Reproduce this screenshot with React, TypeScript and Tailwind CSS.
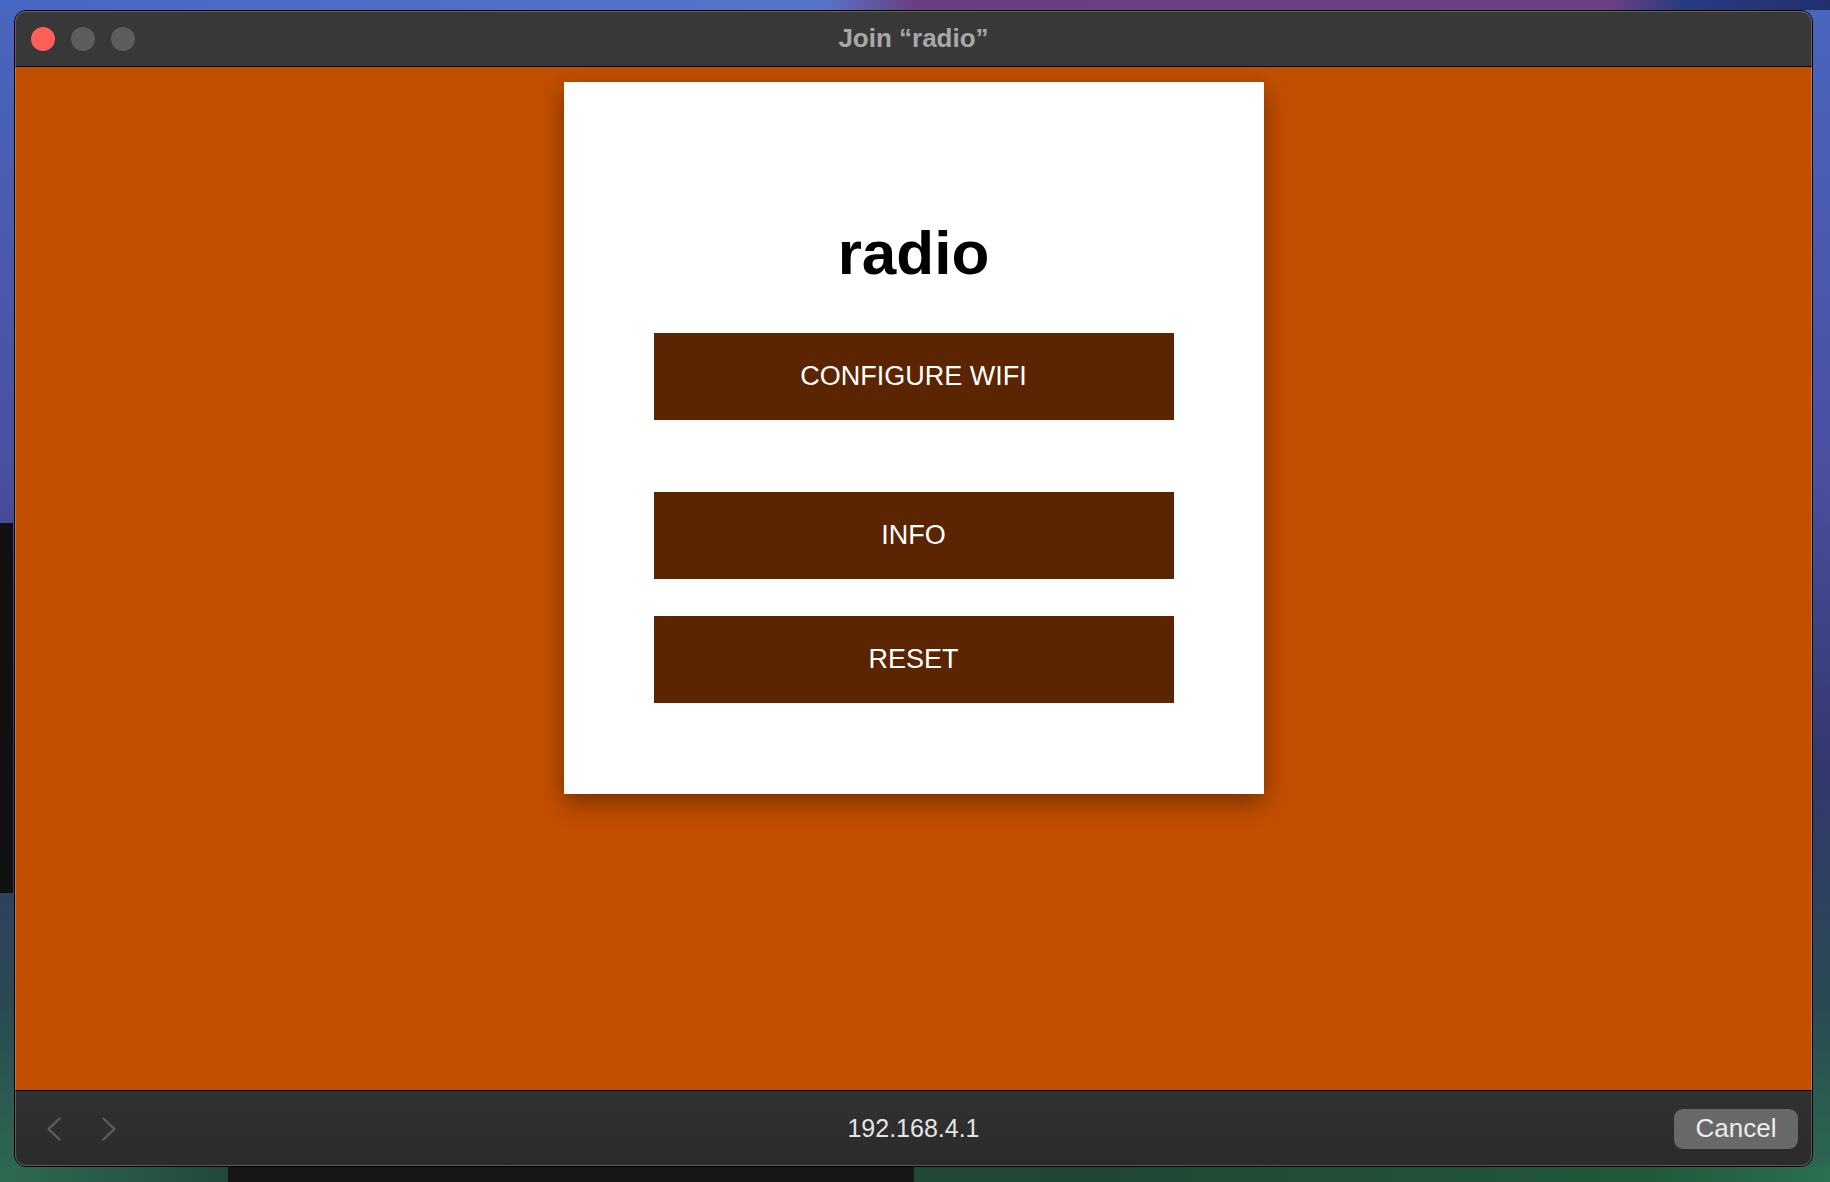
const menuItems = ['CONFIGURE WIFI', 'INFO', 'RESET'];

function TrafficLights() {
  return (
    <div className="flex items-center gap-4 pl-4">
      <span className="h-6 w-6 rounded-full bg-[#fe5f57]" />
      <span className="h-6 w-6 rounded-full bg-[#5d5d5d]" />
      <span className="h-6 w-6 rounded-full bg-[#5d5d5d]" />
    </div>
  );
}

function Chevron({ dir }: { dir: 'left' | 'right' }) {
  return (
    <svg width="14" height="24" viewBox="0 0 14 24" fill="none" stroke="currentColor" strokeWidth="2.2" strokeLinecap="round" strokeLinejoin="round">
      {dir === 'left' ? <path d="M12.5 1.5 1.5 12l11 10.5" /> : <path d="M1.5 1.5 12.5 12l-11 10.5" />}
    </svg>
  );
}

function PortalCard() {
  return (
    <div className="mt-[15px] flex h-[712px] w-[700px] flex-col items-center bg-white pt-[140px] shadow-[0_8px_22px_rgba(0,0,0,0.4)]">
      <h1 className="h-[62px] text-[62px] font-bold leading-[62px] text-black">radio</h1>
      <div className="mt-[49px] flex w-[520px] flex-col">
        {menuItems.map((label, i) => (
          <button
            key={label}
            className={
              'flex h-[87px] w-full items-center justify-center bg-[#5a2500] text-[27px] text-white ' +
              (i === 1 ? 'mt-[72px]' : i === 2 ? 'mt-[37px]' : '')
            }
          >
            {label}
          </button>
        ))}
      </div>
    </div>
  );
}

export default function App() {
  return (
    <div
      className="relative h-[1182px] w-full overflow-hidden bg-[linear-gradient(to_bottom,#4a66be_0%,#4b4fa0_40%,#33386e_65%,#2a4a52_85%,#2b6a50_100%)] pl-[14px] pt-[10px]"
      style={{ fontFamily: '"Liberation Sans", Arial, sans-serif' }}
    >
      {/* wallpaper bits around the window */}
      <div className="absolute left-0 right-0 top-0 h-[10px] bg-[linear-gradient(to_right,#4767c4_0%,#5775c8_45%,#6a3f82_50%,#6b4183_88%,#273c80_92%,#24306e_100%)]" />
      <div className="absolute bottom-0 left-0 right-0 h-[16px] bg-[linear-gradient(to_right,#2f6a52_0%,#224a3c_12%,#1f4834_60%,#22583a_90%,#2b7050_100%)]" />
      <div className="absolute bottom-0 left-[228px] h-[16px] w-[686px] bg-[#161616]" />
      <div className="absolute left-0 top-[523px] h-[370px] w-[13px] bg-[#111111]" />

      <div className="relative flex h-[1157px] w-[1799px] flex-col overflow-hidden rounded-[12px] border border-black">
        {/* title bar */}
        <div className="grid h-[56px] shrink-0 grid-cols-[1fr_auto_1fr] items-center border-b border-black bg-[#383838]">
          <TrafficLights />
          <div className="text-[26px] font-bold text-[#a8a8a8]">Join “radio”</div>
          <div />
        </div>

        {/* captive portal page */}
        <div className="flex flex-1 justify-center bg-[#c24e00]">
          <PortalCard />
        </div>

        {/* bottom bar */}
        <div className="grid h-[76px] shrink-0 grid-cols-[1fr_auto_1fr] items-center border-t border-black bg-[linear-gradient(to_bottom,#313131,#2b2b2b)]">
          <div className="flex items-center gap-[41px] pl-[32px] text-[#5f5f5f]">
            <Chevron dir="left" />
            <Chevron dir="right" />
          </div>
          <div className="text-[25px] text-[#e4e4e4]">192.168.4.1</div>
          <div className="flex justify-end pr-[14px]">
            <button className="flex h-[40px] w-[124px] items-center justify-center rounded-[9px] bg-[#686868] text-[26px] text-[#ececec]">
              Cancel
            </button>
          </div>
        </div>

        {/* window edge highlight */}
        <div className="pointer-events-none absolute inset-0 rounded-[11px] shadow-[inset_0_0_0_1px_rgba(255,255,255,0.22)]" />
      </div>
    </div>
  );
}
